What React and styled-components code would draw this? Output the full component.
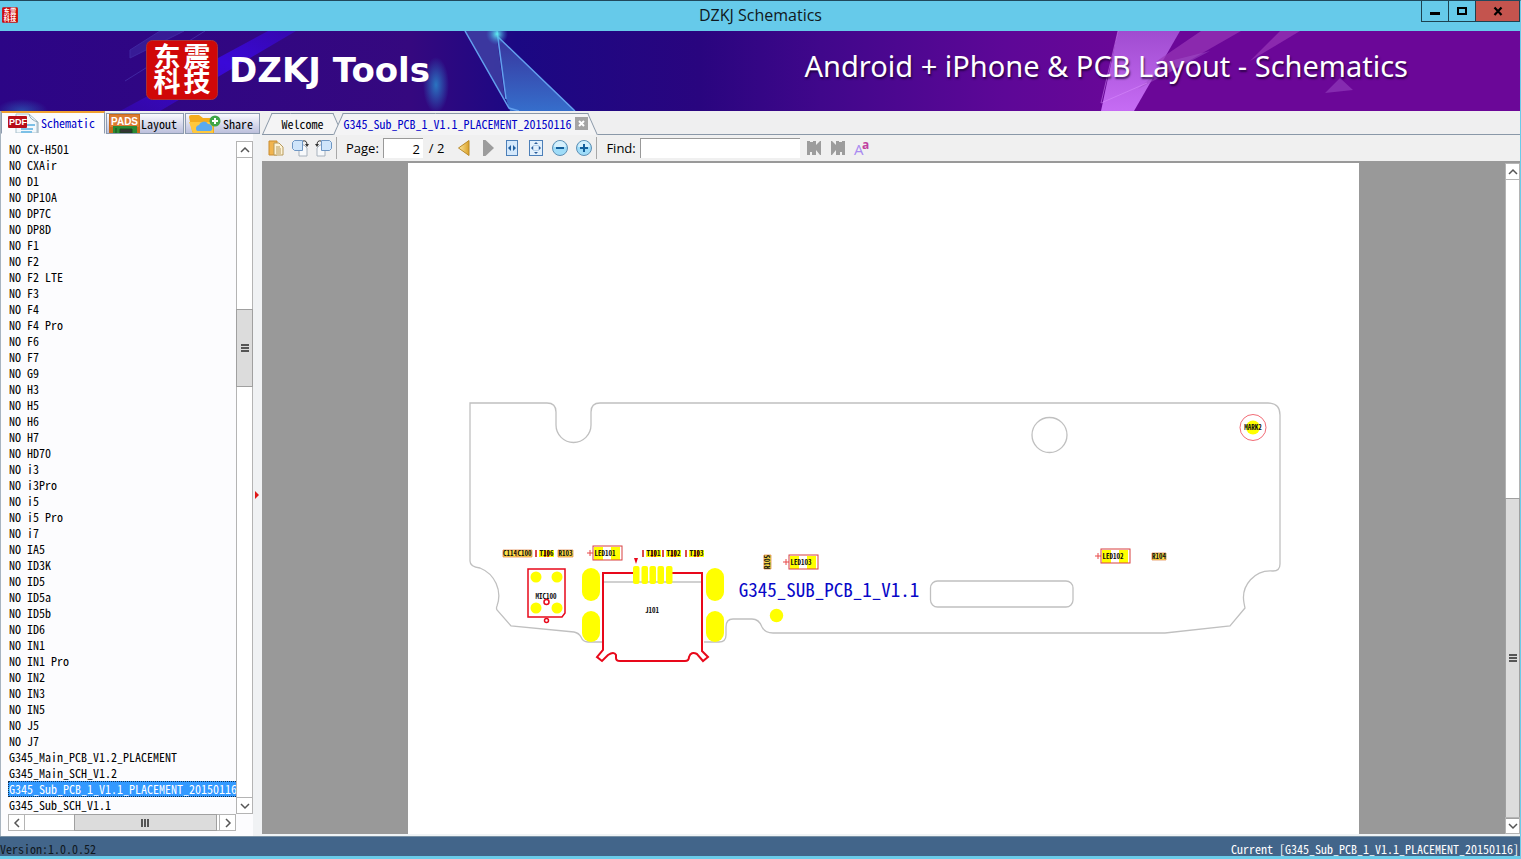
import React, { useState } from "react";
import styled, { createGlobalStyle, css } from "styled-components";

const FILES = [
  "NO CX-H501", "NO CXAir", "NO D1", "NO DP10A", "NO DP7C", "NO DP8D", "NO F1",
  "NO F2", "NO F2 LTE", "NO F3", "NO F4", "NO F4 Pro", "NO F6", "NO F7", "NO G9",
  "NO H3", "NO H5", "NO H6", "NO H7", "NO HD70", "NO i3", "NO i3Pro", "NO i5",
  "NO i5 Pro", "NO i7", "NO IA5", "NO ID3K", "NO ID5", "NO ID5a", "NO ID5b",
  "NO ID6", "NO IN1", "NO IN1 Pro", "NO IN2", "NO IN3", "NO IN5", "NO J5", "NO J7",
  "G345_Main_PCB_V1.2_PLACEMENT",
  "G345_Main_SCH_V1.2",
  "G345_Sub_PCB_1_V1.1_PLACEMENT_20150116",
  "G345_Sub_SCH_V1.1",
];

const CURRENT = "G345_Sub_PCB_1_V1.1_PLACEMENT_20150116";

const App = () => {
  const [selected, setSelected] = useState(CURRENT);
  const [page, setPage] = useState("2");
  const [find, setFind] = useState("");

  return (
    <Window>
      <GlobalStyle />
      <TitleBar>
        <AppIcon><Seal /></AppIcon>
        <Title>DZKJ Schematics</Title>
        <WindowButtons>
          <WindowButton aria-label="Minimize" $width="27px">
            <svg width="12" height="12"><path d="M1 8.500h10" stroke="#000" strokeWidth="3" /></svg>
          </WindowButton>
          <WindowButton aria-label="Maximize" $width="27px">
            <svg width="12" height="12"><path d="M2 3h8v6h-8z" fill="none" stroke="#000" strokeWidth="2" /></svg>
          </WindowButton>
          <WindowButton aria-label="Close" $width="44px" $close>
            <svg width="12" height="12"><path d="M2.500 2.500l7 7.500M9.500 2.500l-7 7.500" stroke="#000" strokeWidth="2.200" /></svg>
          </WindowButton>
        </WindowButtons>
      </TitleBar>

      <Banner>
        <BannerArt />
        <BannerBrand>
          <BannerLogo><Seal /></BannerLogo>
          <BrandName>DZKJ Tools</BrandName>
        </BannerBrand>
        <Slogan>Android + iPhone &amp; PCB Layout - Schematics</Slogan>
      </Banner>

      <Body>
        <Sidebar>
          <SideTabs>
            <SideTab $active $width="104px"><PdfIcon />Schematic</SideTab>
            <SideTab $width="78px"><PadsIcon />Layout</SideTab>
            <SideTab $width="75px"><ShareIcon />Share</SideTab>
          </SideTabs>
          <SideContent>
            <Tree>
              <FileList>
                {FILES.map((name) => (
                  <li key={name}>
                    <FileButton $selected={name === selected} onClick={() => setSelected(name)}>
                      {name}
                    </FileButton>
                  </li>
                ))}
              </FileList>
              <ScrollBar $width="17px">
                <Arrow dir="up" />
                <Track $grow={152} />
                <Thumb $grow={76}><Grip /></Thumb>
                <Track $grow={410} />
                <Arrow dir="down" />
              </ScrollBar>
              <ScrollBar $horizontal>
                <Arrow dir="left" />
                <Track $grow={50} />
                <Thumb $grow={140} $horizontal><Grip $horizontal /></Thumb>
                <Track $grow={4} />
                <Arrow dir="right" />
              </ScrollBar>
            </Tree>
            <Splitter>
              <svg width="6" height="10"><path d="M1 1l4 4l-4 4z" fill="#e01818" /></svg>
            </Splitter>
          </SideContent>
        </Sidebar>

        <Main>
          <DocTabs>
            <DocTab $width="71px">Welcome</DocTab>
            <DocTab $width="255px" $active>
              {CURRENT}
              <CloseTab aria-label="Close tab"><svg width="13" height="13"><path d="M4 4l5 5M9 4l-5 5" stroke="#fff" strokeWidth="2" /></svg></CloseTab>
            </DocTab>
          </DocTabs>
          <Toolbar>
            <ToolButton aria-label="Copy"><CopyIcon /></ToolButton>
            <ToolButton aria-label="Rotate right"><RotateIcon /></ToolButton>
            <ToolButton aria-label="Rotate left"><RotateIcon flip /></ToolButton>
            <Separator />
            <ToolLabel htmlFor="page">Page:</ToolLabel>
            <ToolInput id="page" $width="40px" $right value={page} onChange={(e) => setPage(e.target.value)} />
            <PageCount>/ 2</PageCount>
            <ToolButton aria-label="Previous page">
              <svg width="16" height="18">
                <path d="M13 1.500v15l-10.500-7.500z" fill="url(#gold)" stroke="#b98a2a" />
                <defs><linearGradient id="gold"><stop stopColor="#ffe9a0" /><stop offset="1" stopColor="#d9a028" /></linearGradient></defs>
              </svg>
            </ToolButton>
            <ToolButton aria-label="Next page">
              <svg width="16" height="18"><path d="M3 1h2.500l8.500 8l-8.500 8h-2.500z" fill="#9c9c9c" /></svg>
            </ToolButton>
            <ToolButton aria-label="Fit width"><FitIcon /></ToolButton>
            <ToolButton aria-label="Fit page"><FitIcon page /></ToolButton>
            <ToolButton aria-label="Zoom out"><ZoomIcon /></ToolButton>
            <ToolButton aria-label="Zoom in"><ZoomIcon plus /></ToolButton>
            <Separator />
            <ToolLabel htmlFor="find">Find:</ToolLabel>
            <ToolInput id="find" $width="160px" value={find} onChange={(e) => setFind(e.target.value)} />
            <ToolButton aria-label="Find previous"><FindIcon /></ToolButton>
            <ToolButton aria-label="Find next"><FindIcon next /></ToolButton>
            <ToolButton aria-label="Match case"><CaseIcon /></ToolButton>
          </Toolbar>
          <Viewer>
            <Desk>
              <Sheet><Board /></Sheet>
            </Desk>
            <ScrollBar $width="15px">
              <Arrow dir="up" />
              <Track $grow={321} />
              <Thumb $grow={321}><Grip /></Thumb>
              <Arrow dir="down" />
            </ScrollBar>
          </Viewer>
        </Main>
      </Body>

      <StatusBar>
        <Version>Version:1.0.0.52</Version>
        <Current>Current [{CURRENT}]</Current>
      </StatusBar>
    </Window>
  );
};

export default App;

const Seal = () => (
  <svg viewBox="0 0 72 60" width="100%" height="100%" preserveAspectRatio="none">
    <rect x="0.500" y="0.500" width="71" height="59" rx="6" fill="#d00808" stroke="#a83038" />
    <g fill="#fff" fontFamily="Noto Sans CJK SC, sans-serif" fontWeight="700" fontSize="27" textAnchor="middle">
      <text x="21" y="27">东</text>
      <text x="51" y="27">震</text>
      <text x="21" y="52">科</text>
      <text x="51" y="52">技</text>
    </g>
  </svg>
);

const BannerArt = () => (
  <Art viewBox="0 0 1520 80" preserveAspectRatio="none">
    <defs>
      <linearGradient id="base">
        <stop stopColor="#2c0586" />
        <stop offset="0.270" stopColor="#35087f" />
        <stop offset="0.340" stopColor="#1b0883" />
        <stop offset="0.460" stopColor="#29057f" />
        <stop offset="0.540" stopColor="#40078b" />
        <stop offset="0.660" stopColor="#5d0797" />
        <stop offset="0.750" stopColor="#6b0798" />
        <stop offset="1" stopColor="#6b0798" />
      </linearGradient>
      <linearGradient id="streak" x1="1" y1="0" x2="0" y2="1">
        <stop stopColor="#3a08d8" stopOpacity="0.500" />
        <stop offset="0.400" stopColor="#3a08d8" />
        <stop offset="1" stopColor="#3a08d8" stopOpacity="0.400" />
      </linearGradient>
      <linearGradient id="glass" x1="0" y1="0" x2="0" y2="1">
        <stop stopColor="#3d3aa0" />
        <stop offset="1" stopColor="#3a80d8" />
      </linearGradient>
      <linearGradient id="pink" x1="0" y1="0" x2="0" y2="1">
        <stop stopColor="#a04cd0" />
        <stop offset="1" stopColor="#c66cf4" />
      </linearGradient>
      <radialGradient id="glow">
        <stop stopColor="#2a80c8" stopOpacity="0.900" />
        <stop offset="1" stopColor="#2a80c8" stopOpacity="0" />
      </radialGradient>
      <radialGradient id="flare">
        <stop stopColor="#5ff0f0" />
        <stop offset="1" stopColor="#3a80d8" stopOpacity="0" />
      </radialGradient>
    </defs>
    <rect width="1520" height="80" fill="url(#base)" />
    <path d="M268 0h28l-136 80h-40z" fill="url(#streak)" />
    <path d="M160 0h24l-54 27v-8zM205 0l-80 50" fill="#4030a8" opacity="0.500" stroke="#5048c0" strokeWidth="1" />
    <ellipse cx="436" cy="54" rx="13" ry="28" fill="url(#glow)" />
    <ellipse cx="22" cy="80" rx="26" ry="12" fill="url(#glow)" opacity="0.600" />
    <path d="M465 0h31l9 69z" fill="#4040a4" opacity="0.850" />
    <path d="M497 5l78 75h-65l-4-12z" fill="url(#glass)" opacity="0.850" />
    <path d="M465 0l44 77l10 3M497 0l9 68M497 5l78 75" fill="none" stroke="#63a0ee" strokeWidth="1.500" />
    <circle cx="497" cy="3" r="11" fill="url(#flare)" />
    <path d="M1118 0h62l-46 80h-33z" fill="url(#pink)" />
    <path d="M1201 0h40l-70 40l-14-10zM1280 0h20l-50 30z" fill="#9838b8" opacity="0.700" />
    <path d="M1170 30l40-10l-72 38zM1340 47l13 12l-28 3z" fill="#a050c8" opacity="0.500" />
    <path d="M1101 72l46-20M1118 0l-17 72" stroke="#dc90ff" opacity="0.500" />
  </Art>
);

const PdfIcon = () => (
  <svg width="32" height="20">
    <path d="M8 1h13l8 7v12h-21z" fill="#f2f8fc" stroke="#a9c0cc" />
    <path d="M21 1q1 6 9 8v11" fill="none" stroke="#8fa9b6" />
    <path d="M13 16h12M13 12h14M13 19h11" stroke="#7cc0e6" strokeWidth="2" />
    <rect x="0" y="3" width="19" height="12" rx="1" fill="#b80d18" />
    <text x="1" y="12" fontSize="9" fontWeight="700" fontFamily="Liberation Sans, sans-serif" fill="#fff">PDF</text>
  </svg>
);

const PadsIcon = () => (
  <svg width="31" height="19">
    <rect width="31" height="19" fill="#c86a1a" />
    <rect x="1" y="1" width="29" height="12" fill="#dc7a30" />
    <rect x="4" y="12" width="24" height="7" fill="#2c8a34" />
    <path d="M11 15h12v4h-12zM7 14v5" fill="#333" stroke="#164a1c" />
    <text x="2" y="11" fontSize="10" fontWeight="700" fontFamily="Liberation Sans, sans-serif" fill="#fff">PADS</text>
  </svg>
);

const ShareIcon = () => (
  <svg width="34" height="19">
    <path d="M1 3q0-2 2-2h8l4 3h9q2 0 2 2v13h-20q-2 0-2-2z" fill="#f4ac1c" />
    <path d="M1 8h24v11h-20z" fill="#ffc83c" />
    <path d="M9 17a3.500 3.500 0 0 1 2-6a5 5 0 0 1 9-1a4 4 0 0 1 3 7z" fill="#5aaaf0" />
    <circle cx="27" cy="7" r="5.500" fill="#3fa648" />
    <path d="M24 7h6M27 4v6" stroke="#fff" strokeWidth="2" />
  </svg>
);

const CopyIcon = () => (
  <svg width="16" height="18">
    <path d="M1 2h8v14h-8z" fill="#f1b44e" stroke="#c98c30" />
    <path d="M6 4h5l4 4v8h-9z" fill="#fdf3d8" stroke="#b79a5a" />
    <path d="M8 8h4M8 10h5M8 12h5M8 14h5" stroke="#b79a5a" />
  </svg>
);

const RotateIcon = ({ flip }) => (
  <svg width="18" height="18">
    <g transform={flip ? "matrix(-1 0 0 1 18 0)" : undefined}>
      <path d="M8 6h5l3 3v8h-8z" fill="#f7f9fb" stroke="#a7b1bc" />
      <path d="M3.500 1.500h8v10h-8l-2-2v-6z" fill="#cfe5fa" stroke="#6f97c4" />
      <path d="M12 2q4-1 4 4" fill="none" stroke="#333" />
      <path d="M14 5h4l-2 3z" fill="#333" />
    </g>
  </svg>
);

const FitIcon = ({ page }) => (
  <svg width="16" height="18">
    {page ? (
      <>
        <rect x="1.500" y="1.500" width="13" height="15" fill="#e2f0fc" stroke="#4c7fb8" />
        <path d="M8 3l2 2h-4zM8 15l2-2h-4zM3 9l2-2v4zM13 9l-2-2v4z" fill="#2c5f9c" />
        <rect x="5.500" y="6.500" width="5" height="5" fill="none" stroke="#8ab0d8" strokeDasharray="1 1" />
      </>
    ) : (
      <>
        <rect x="2.500" y="1.500" width="11" height="15" fill="#d4e8fb" stroke="#4c7fb8" />
        <path d="M4 9l3-3v6zM12 9l-3-3v6z" fill="#1f5fa0" />
      </>
    )}
  </svg>
);

const ZoomIcon = ({ plus }) => (
  <svg width="18" height="18">
    <circle cx="9" cy="9" r="7.500" fill="#9fdcf8" stroke="#5f8fb4" />
    <path d="M3 8a6 6 0 0 1 12 0z" fill="#d6f0fc" />
    <path d={plus ? "M5 9h8M9 5v8" : "M5 9h8"} stroke="#14609c" strokeWidth="2" />
  </svg>
);

const FindIcon = ({ next }) => (
  <svg width="16" height="18">
    <path
      transform={next ? "matrix(-1 0 0 1 16 0)" : undefined}
      d="M1 2h3v1h3v-1h3v4l4-4h1v14h-1l-4-5v5h-4v-3h-2v3h-3z"
      fill="#9c9c9c"
    />
  </svg>
);

const CaseIcon = () => (
  <svg width="18" height="24">
    <text x="1" y="19" fontSize="15" fontFamily="Open Sans, sans-serif" fill="#a98af0">A</text>
    <text x="9" y="13" fontSize="12" fontWeight="700" fontFamily="Open Sans, sans-serif" fill="#c13fa0">a</text>
  </svg>
);

const ARROWS = {
  up: "M2 8l4-4l4 4",
  down: "M2 4l4 4l4-4",
  left: "M8 2l-4 4l4 4",
  right: "M4 2l4 4l-4 4",
};

const Arrow = ({ dir }) => (
  <ArrowButton aria-label={`Scroll ${dir}`}>
    <svg width="12" height="12"><path d={ARROWS[dir]} fill="none" stroke="#555" strokeWidth="1.500" /></svg>
  </ArrowButton>
);

const Led = ({ x, y, name }) => (
  <g>
    <path d={`M${x - 6} ${y + 7}h6M${x - 3} ${y + 4}v6`} stroke="#e84848" />
    <rect x={x + 1} y={y + 1} width="9" height="13" fill="#ff0" />
    <rect x={x + 18} y={y + 1} width="9" height="13" fill="#ff0" />
    <rect x={x} y={y} width="29" height="14" fill="none" stroke="#d84040" />
    <text x={x + 12} y={y + 10}>{name}</text>
  </g>
);

const Part = ({ x, y, name, width = 15, bars }) => (
  <g>
    <rect x={x} y={y} width={width} height="7" fill={bars ? "#ff0" : "#ffe04a"} />
    <path
      d={bars ? `M${x - 3} ${y}v7M${x + 6} ${y}v7M${x + 9} ${y}v7` : `M${x} ${y}h${width}v7h${-width}z`}
      fill="none"
      stroke={bars ? "#d01010" : "#e08040"}
      strokeWidth={bars ? 1.5 : 0.7}
    />
    <text x={x + width / 2} y={y + 6}>{name}</text>
  </g>
);

// bottom side of the sub board, in sheet units
const Board = () => (
  <svg viewBox="408 163 951 671" width="100%" height="100%">
    <g fill="none" stroke="#c0c0c0" strokeWidth="1.300">
      <path d="M602 642H588Q583 642 581 637Q579 633 574 632L511 626L497 610Q496 608 497 606A30 30 0 0 0 480 568Q470 567 470 561V403H547Q556 403 556 412V425A17.500 17.500 0 0 0 591 425V412Q591 403 600 403H1268Q1280 403 1280 415V564Q1280 571 1273 571A27 27 0 0 0 1244 603L1245 608L1230 626L1165 633H773Q765 633 762 627Q759 619 752 619H733Q726 619 726 627V635Q726 642 719 642H704" />
      <path d="M603 582H703" />
      <circle cx="1049.500" cy="435" r="17.500" />
      <rect x="930.500" y="581" width="142.500" height="26" rx="7" />
    </g>

    <g fill="#ff0">
      <rect x="582" y="568" width="18" height="33" rx="9" />
      <rect x="582" y="611" width="18" height="31" rx="9" />
      <rect x="706" y="568" width="18" height="33" rx="9" />
      <rect x="706" y="611" width="18" height="31" rx="9" />
      <circle cx="776.500" cy="615.500" r="6.700" />
      <circle cx="536" cy="577" r="5.500" />
      <circle cx="557" cy="577" r="5.500" />
      <circle cx="536" cy="608" r="5.500" />
      <circle cx="557" cy="608" r="5.500" />
      <circle cx="1253" cy="427.500" r="7" />
    </g>

    <g fill="none" stroke="#e8081a">
      <path strokeWidth="2" d="M634 573H603V650L597 657L602 661L608 655Q614 651 616 655V658Q616 661 620 661H685Q689 661 689 657Q691 651 697 654L703 661L708 657L702 651V573H672" />
      <path strokeWidth="1.500" d="M528 569H565V613L562 617H528z" />
      <circle cx="546.500" cy="602" r="2.500" strokeWidth="1.500" />
      <circle cx="546.500" cy="620.500" r="2" strokeWidth="1.500" />
      <circle cx="1253" cy="427.500" r="13" strokeWidth="0.600" />
      <path d="M634 558h4l-2 6z" fill="#e8081a" stroke="none" />
    </g>

    <g fill="#ff0">
      {[633, 641.5, 649.5, 657.5, 666].map((x) => (
        <rect key={x} x={x} y="566" width="6.500" height="18" rx="2" />
      ))}
    </g>

    <PartNames>
      <Part x={503} y={550} name="C114" width={14} />
      <Part x={517} y={550} name="C100" />
      <Part x={539} y={550} name="T106" bars />
      <Part x={558} y={550} name="R103" />
      <Part x={646} y={550} name="T101" bars />
      <Part x={666} y={550} name="T102" bars />
      <Part x={689} y={550} name="T103" bars />
      <Part x={1152} y={553} name="R104" width={14} />
      <g transform="rotate(-90 767 562)"><Part x={760} y={559} name="R105" width={14} /></g>
      <Led x={593} y={546} name="LED101" />
      <Led x={789} y={555} name="LED103" />
      <Led x={1101} y={549} name="LED102" />
      <text x="546" y="599">MIC100</text>
      <text x="652" y="613">J101</text>
      <text x="1253" y="430">MARK2</text>
    </PartNames>
    <BoardName x="829" y="597">G345_SUB_PCB_1_V1.1</BoardName>
  </svg>
);

const mono = css`
  font-family: "Noto Sans Mono CJK SC", "Liberation Mono", monospace;
  font-size: 12px;
  line-height: 16px;
`;

const GlobalStyle = createGlobalStyle`
  *, *::before, *::after { box-sizing: border-box; }
  body {
    margin: 0;
    overflow: hidden;
    font-family: "Open Sans", "Liberation Sans", sans-serif;
  }
  button, input {
    margin: 0;
    padding: 0;
    border: 0;
    border-radius: 0;
    background: none;
    font: inherit;
    color: inherit;
  }
  svg { display: block; }
`;

const Window = styled.div`
  display: flex;
  flex-direction: column;
  height: 100vh;
  border-top: 1px solid #20485c;
  border-right: 1px solid #6accea;
  border-bottom: 3px solid #6accea;
  background: #f0f0f0;
`;

const TitleBar = styled.header`
  position: relative;
  display: flex;
  flex: none;
  height: 30px;
  background: #66caea;
`;

const AppIcon = styled.div`
  width: 16px;
  height: 16px;
  margin: 6px 2px;
`;

const Title = styled.h1`
  flex: 1;
  margin: 0;
  padding-left: 80px;
  text-align: center;
  font-size: 16px;
  font-weight: 400;
  line-height: 29px;
  color: #101820;
`;

const WindowButtons = styled.div`
  display: flex;
  height: 21px;
  border-left: 1px solid #1d4150;
`;

const WindowButton = styled.button`
  display: flex;
  align-items: center;
  justify-content: center;
  width: ${(props) => props.$width};
  border-right: 1px solid #1d4150;
  border-bottom: 1px solid #1d4150;
  background: ${(props) => (props.$close ? "#c4544e" : "transparent")};
`;

const Banner = styled.section`
  position: relative;
  display: flex;
  flex: none;
  align-items: center;
  justify-content: space-between;
  height: 80px;
  padding: 0 112px 2px 146px;
  color: #fff;
`;

const Art = styled.svg`
  position: absolute;
  inset: 0;
  width: 100%;
  height: 100%;
`;

const BannerBrand = styled.div`
  position: relative;
  display: flex;
  align-items: center;
  gap: 11px;
`;

const BannerLogo = styled.div`
  width: 72px;
  height: 60px;
`;

const BrandName = styled.div`
  font-family: "DejaVu Sans", sans-serif;
  font-size: 34px;
  font-weight: 700;
  line-height: 40px;
`;

const Slogan = styled.div`
  position: relative;
  padding-bottom: 8px;
  font-family: "Noto Sans", "Open Sans", sans-serif;
  font-size: 29px;
  line-height: 36px;
  text-shadow: 1px 2px 2px rgba(20, 0, 40, 0.7);
`;

const Body = styled.div`
  display: flex;
  flex: 1;
  min-height: 0;
`;

const Sidebar = styled.aside`
  display: flex;
  flex: none;
  flex-direction: column;
  width: 262px;
  border-left: 1px solid #a8b4c0;
`;

const SideTabs = styled.div`
  display: flex;
  align-items: flex-end;
  gap: 1px;
  height: 23px;
`;

const SideTab = styled.button`
  ${mono}
  display: flex;
  align-items: center;
  gap: 1px;
  width: ${(props) => props.$width};
  height: ${(props) => (props.$active ? "23px" : "21px")};
  padding-left: ${(props) => (props.$active ? "6px" : "2px")};
  border: 1px solid #8d9bb0;
  border-top: ${(props) => (props.$active ? "2px solid #f0a030" : "1px solid #8d9bb0")};
  border-bottom-color: ${(props) => (props.$active ? "#fcfcfe" : "#8d9bb0")};
  background: ${(props) =>
    props.$active ? "#fcfcfe" : "linear-gradient(#fafafe, #d4d6ea 60%, #bcc0dc)"};
  color: ${(props) => (props.$active ? "#0000c8" : "#000")};
  overflow: hidden;
  svg { flex: none; }
`;

const SideContent = styled.div`
  display: flex;
  flex: 1;
  min-height: 0;
  background: #fcfcfe;
`;

const Tree = styled.div`
  display: grid;
  flex: 1;
  grid-template: minmax(0, 1fr) 17px / minmax(0, 1fr) 17px;
  padding: 7px 0 5px 7px;
`;

const FileList = styled.ul`
  margin: 0;
  padding: 0;
  list-style: none;
  overflow: hidden;
`;

const FileButton = styled.button`
  ${mono}
  display: block;
  height: 16px;
  padding: 0 1px;
  white-space: nowrap;
  outline: ${(props) => (props.$selected ? "1px dotted #103050" : "none")};
  outline-offset: -1px;
  background: ${(props) => (props.$selected ? "#3399ff" : "transparent")};
  color: ${(props) => (props.$selected ? "#fff" : "#000")};
`;

const Splitter = styled.div`
  display: flex;
  align-items: center;
  width: 9px;
  padding: 20px 0 0 1px;
  background: #f0f2f4;
`;

const ScrollBar = styled.div`
  display: flex;
  flex: none;
  flex-direction: ${(props) => (props.$horizontal ? "row" : "column")};
  width: ${(props) => props.$width};
  border: 1px solid #b4b4b4;
  background: #fff;
`;

const ArrowButton = styled.button`
  display: flex;
  flex: 0 0 15px;
  align-items: center;
  justify-content: center;
  outline: 1px solid #b4b4b4;
`;

const Track = styled.div`
  flex: ${(props) => props.$grow} 1 0;
`;

const Thumb = styled.div`
  display: flex;
  flex: ${(props) => props.$grow} 1 0;
  align-items: center;
  justify-content: center;
  outline: 1px solid #a0a0a0;
  background: #dcdcdc;
`;

const Grip = styled.span`
  width: 8px;
  height: 8px;
  background: repeating-linear-gradient(
    ${(props) => (props.$horizontal ? "90deg" : "180deg")},
    #555 0 2px,
    transparent 2px 3px
  );
`;

const Main = styled.main`
  display: flex;
  flex: 1;
  flex-direction: column;
  min-width: 0;
`;

const DocTabs = styled.div`
  display: flex;
  align-items: flex-end;
  height: 24px;
  padding-left: 5px;
  border-bottom: 1px solid #8a98a8;
  background: #efeff0;
`;

const DocTab = styled.div`
  ${mono}
  position: relative;
  display: flex;
  align-items: center;
  justify-content: center;
  gap: 3px;
  width: ${(props) => props.$width};
  height: 21px;
  color: ${(props) => (props.$active ? "#0000c8" : "#000")};
  z-index: 0;

  &::before,
  &::after {
    content: "";
    position: absolute;
    z-index: -1;
    top: 0;
    bottom: ${(props) => (props.$active ? "-1px" : "0")};
    border-top: 1px solid #8a98a8;
    background: #f4f4f5;
  }
  &::before {
    left: 0;
    width: 60%;
    border-left: 1px solid #8a98a8;
    transform: skewX(-24deg);
  }
  &::after {
    right: 0;
    width: 60%;
    border-right: 1px solid #8a98a8;
    transform: skewX(24deg);
  }
`;

const CloseTab = styled.button`
  background: #a4a4a4;
`;

const Toolbar = styled.div`
  display: flex;
  flex: none;
  align-items: center;
  height: 28px;
  padding-left: 2px;
  border-bottom: 2px solid #999;
  background: #f0f0f0;
  font-size: 13px;
  line-height: 20px;
`;

const ToolButton = styled.button`
  display: flex;
  align-items: center;
  justify-content: center;
  width: 24px;
  height: 24px;
`;

const Separator = styled.span`
  width: 1px;
  height: 22px;
  background: #a8a8a8;
`;

const ToolLabel = styled.label`
  padding: 0 4px 0 9px;
`;

const ToolInput = styled.input`
  width: ${(props) => props.$width};
  height: 20px;
  margin-right: 2px;
  padding: 0 3px;
  border-top: 1px solid #999;
  border-left: 1px solid #999;
  background: #fff;
  text-align: ${(props) => (props.$right ? "right" : "left")};
`;

const PageCount = styled.span`
  padding: 0 8px 0 4px;
`;

const Viewer = styled.div`
  display: flex;
  flex: 1;
  min-height: 0;
  border-bottom: 2px solid #f0f4f6;
`;

const Desk = styled.div`
  flex: 1;
  padding: 0 146px;
  background: #999;
`;

const Sheet = styled.div`
  height: 100%;
  background: #fff;
`;

const PartNames = styled.g`
  font: 700 7px "Noto Sans Mono CJK SC", "Liberation Mono", monospace;
  text-anchor: middle;
  fill: #101010;
`;

const BoardName = styled.text`
  font: 19px "Noto Sans Mono CJK SC", "Liberation Mono", monospace;
  text-anchor: middle;
  fill: #0808c8;
`;

const StatusBar = styled.footer`
  ${mono}
  display: flex;
  flex: none;
  justify-content: space-between;
  height: 20px;
  padding-top: 4px;
  border-top: 1px solid #7890a4;
  background: #42658a;
`;

const Version = styled.span`
  color: #101820;
`;

const Current = styled.span`
  padding-right: 1px;
  color: #fff;
`;
